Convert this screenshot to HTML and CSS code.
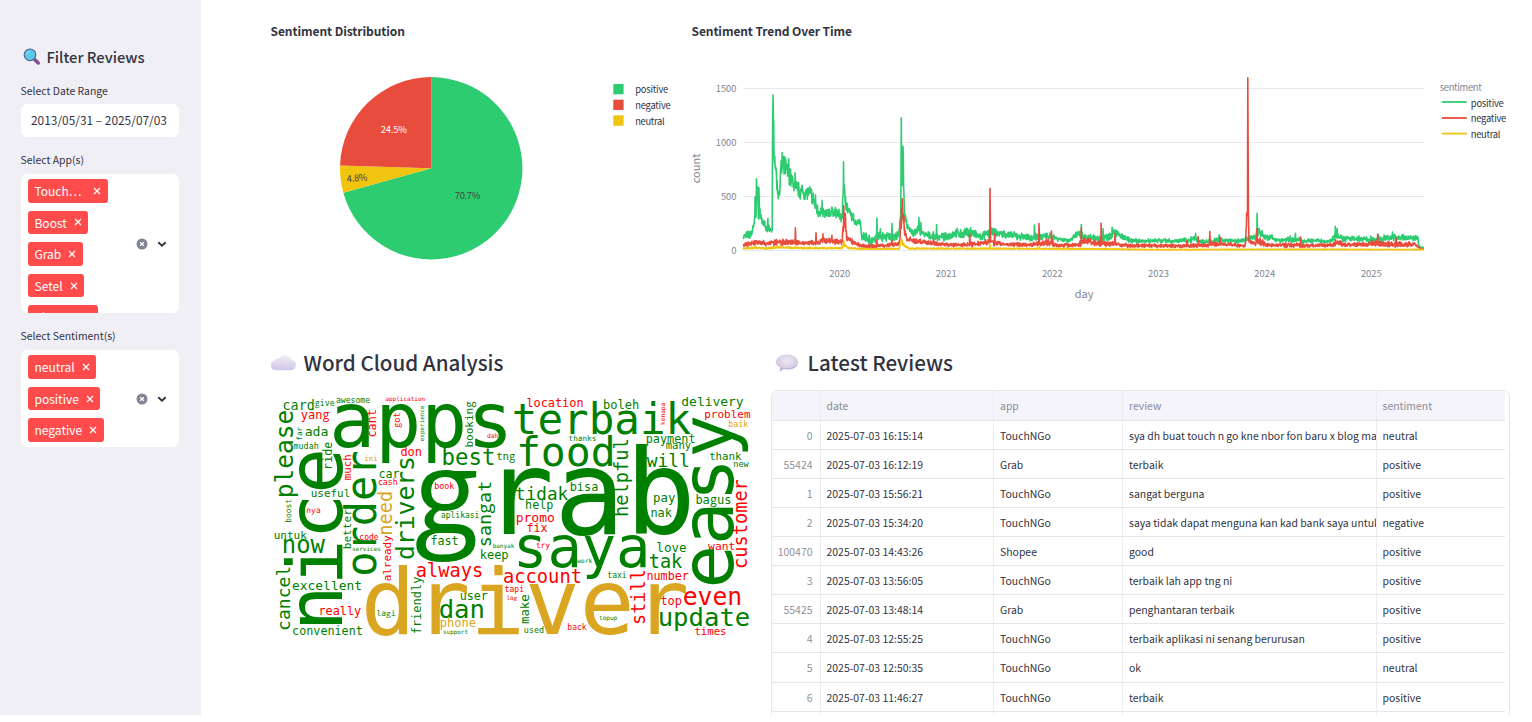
FILE: index.html
```html
<!DOCTYPE html>
<html lang="en">
<head>
<meta charset="utf-8">
<title>Review Dashboard</title>
<link rel="stylesheet" href="styles.css">
</head>
<body>
<svg width="0" height="0" class="defs">
  <defs>
    <symbol id="x" viewBox="0 0 8 8"><path d="M1 1L7 7M7 1L1 7" stroke="#fff" stroke-width="1.3" fill="none"/></symbol>
    <symbol id="controls" viewBox="0 0 36 12">
      <circle cx="6" cy="6" r="5.5" fill="#808495"/>
      <path d="M4.2 4.2L7.8 7.8M7.8 4.2L4.2 7.8" stroke="#fff" stroke-width="1.3"/>
      <path d="M22.3 4.3L26 7.8L29.7 4.3" stroke="#31333f" stroke-width="1.9" fill="none"/>
    </symbol>
  </defs>
</svg>
<div class="app">
  <aside class="sidebar">
    <h2 class="side-title">
      <svg class="lens" viewBox="0 0 18 18">
        <path d="M11.3 11.3L15.3 15" stroke="#7d4f8d" stroke-width="3.4" stroke-linecap="round"/>
        <circle cx="7" cy="6.8" r="5.8" fill="#5cc8ea" stroke="#4d6596" stroke-width="1.2"/>
        <path d="M4 6.5Q4.5 4 7 3.5" stroke="#8bdcf3" stroke-width="1.2" fill="none"/>
      </svg>
      <span>Filter Reviews</span>
    </h2>
    <div class="label">Select Date Range</div>
    <div class="field date">2013/05/31 – 2025/07/03</div>
    <div class="label label-apps">Select App(s)</div>
    <div class="field multi apps">
      <div class="chips">
        <span class="chip"><span class="cut">Touch…</span><svg><use href="#x"/></svg></span>
        <span class="chip">Boost<svg><use href="#x"/></svg></span>
        <span class="chip">Grab<svg><use href="#x"/></svg></span>
        <span class="chip">Setel<svg><use href="#x"/></svg></span>
        <span class="chip">Shopee<svg><use href="#x"/></svg></span>
      </div>
      <svg class="controls"><use href="#controls"/></svg>
    </div>
    <div class="label label-sent">Select Sentiment(s)</div>
    <div class="field multi sentiments">
      <div class="chips">
        <span class="chip">neutral<svg><use href="#x"/></svg></span>
        <span class="chip">positive<svg><use href="#x"/></svg></span>
        <span class="chip">negative<svg><use href="#x"/></svg></span>
      </div>
      <svg class="controls"><use href="#controls"/></svg>
    </div>
  </aside>
  <main class="main">
    <section class="charts">
      <svg class="pie" viewBox="271 0 421 340">
        <text class="chart-title" x="270.5" y="35.5" textLength="134.5">Sentiment Distribution</text>
        <g id="slices"></g>
        <text class="small inside-light" x="380.8" y="132.8" textLength="26">24.5%</text>
        <text class="small inside-dark" x="454.8" y="199" textLength="25.5">70.7%</text>
        <text class="small inside-dark" x="346.8" y="181.3" textLength="20.5" transform="rotate(-5 357 178)">4.8%</text>
        <rect x="613.3" y="84" width="10.3" height="10.3" fill="#2ecc71"/>
        <rect x="613.3" y="99.7" width="10.3" height="10.3" fill="#e74c3c"/>
        <rect x="613.3" y="115.4" width="10.3" height="10.3" fill="#f1c40f"/>
        <text class="small" x="635.2" y="93.4" textLength="33">positive</text>
        <text class="small" x="635.2" y="109.2" textLength="35.5">negative</text>
        <text class="small" x="635.2" y="124.9" textLength="29.5">neutral</text>
      </svg>
      <svg class="trend" viewBox="692 0 840 340">
        <text class="chart-title" x="691.5" y="35.5" textLength="160.5">Sentiment Trend Over Time</text>
        <path d="M743.5 88.5H1424.5M743.5 142.5H1424.5M743.5 196.5H1424.5M743.5 250.5H1424.5" stroke="#e8e8f0"/>
        <g class="small axis">
          <text x="736.5" y="92.2" text-anchor="end">1500</text>
          <text x="736.5" y="146.2" text-anchor="end">1000</text>
          <text x="736.5" y="200.2" text-anchor="end">500</text>
          <text x="736.5" y="254.2" text-anchor="end">0</text>
          <text x="839.7" y="277.3" text-anchor="middle">2020</text>
          <text x="946.2" y="277.3" text-anchor="middle">2021</text>
          <text x="1052.3" y="277.3" text-anchor="middle">2022</text>
          <text x="1158.5" y="277.3" text-anchor="middle">2023</text>
          <text x="1264.7" y="277.3" text-anchor="middle">2024</text>
          <text x="1371.3" y="277.3" text-anchor="middle">2025</text>
          <text class="axis-title" x="1084" y="298" text-anchor="middle">day</text>
          <text class="axis-title" transform="translate(700 168.5) rotate(-90)" text-anchor="middle">count</text>
          <text x="1439.7" y="90.5" textLength="42">sentiment</text>
        </g>
        <g id="series"></g>
        <path d="M1442 102H1466.8" stroke="#2ecc71" stroke-width="1.8"/>
        <path d="M1442 118H1466.8" stroke="#e74c3c" stroke-width="1.8"/>
        <path d="M1442 133.6H1466.8" stroke="#f1c40f" stroke-width="1.8"/>
        <text class="small" x="1470.8" y="106.5" textLength="33">positive</text>
        <text class="small" x="1470.8" y="122.3" textLength="35.5">negative</text>
        <text class="small" x="1470.8" y="138.1" textLength="29.5">neutral</text>
      </svg>
    </section>
    <section class="lower">
      <div class="cloud-panel">
        <h2 class="heading">
          <svg class="emoji" viewBox="0 0 26 20">
            <defs><linearGradient id="cg" x2="0" y2="1"><stop offset="0" stop-color="#efeff4"/><stop offset="1" stop-color="#cfc5ea"/></linearGradient></defs>
            <path d="M5.2 17.2A4.9 4.9 0 0 1 4 7.8Q5.6 4.3 9.2 5.5A6.9 6.9 0 0 1 21.3 6.5A5.4 5.4 0 0 1 19.8 17.2Z" fill="url(#cg)"/>
            <path d="M9 6Q13 7 13 11M14 14Q18 15 20 10" stroke="#d8d4e6" fill="none" stroke-width=".8"/>
          </svg>
          <span>Word Cloud Analysis</span>
        </h2>
        <svg class="cloud" id="cloud" viewBox="271 390 484 250"></svg>
      </div>
      <div class="reviews-panel">
        <h2 class="heading">
          <svg class="emoji" viewBox="0 0 26 20">
            <defs><radialGradient id="bg" cy=".35"><stop offset="0" stop-color="#efeaf2"/><stop offset="1" stop-color="#d5c9e4"/></radialGradient></defs>
            <path d="M12 1.6C18.5 1.6 23 4.9 23 9.2S18.5 16.4 12.5 16.4C11 16.4 9.7 16.3 8.5 16L4.7 18.6L5.3 14.6C2.5 13.3 1 11.5 1 9.2C1 4.9 5.7 1.6 12 1.6Z" fill="url(#bg)"/>
            <path d="M1.5 11Q4 15.4 12 15.4Q20 15.2 22.6 11Q21.5 16.4 12.5 16.4L8.5 16L4.7 18.6L5.3 14.6Q2 13 1.5 11Z" fill="#c3b3d8"/>
          </svg>
          <span>Latest Reviews</span>
        </h2>
        <div class="table">
          <div class="row head"><span></span><span>date</span><span>app</span><span>review</span><span>sentiment</span></div>
          <div class="row"><span>0</span><span>2025-07-03 16:15:14</span><span>TouchNGo</span><span>sya dh buat touch n go kne nbor fon baru x blog ma</span><span>neutral</span></div>
          <div class="row"><span>55424</span><span>2025-07-03 16:12:19</span><span>Grab</span><span>terbaik</span><span>positive</span></div>
          <div class="row"><span>1</span><span>2025-07-03 15:56:21</span><span>TouchNGo</span><span>sangat berguna</span><span>positive</span></div>
          <div class="row"><span>2</span><span>2025-07-03 15:34:20</span><span>TouchNGo</span><span>saya tidak dapat menguna kan kad bank saya untuk</span><span>negative</span></div>
          <div class="row"><span>100470</span><span>2025-07-03 14:43:26</span><span>Shopee</span><span>good</span><span>positive</span></div>
          <div class="row"><span>3</span><span>2025-07-03 13:56:05</span><span>TouchNGo</span><span>terbaik lah app tng ni</span><span>positive</span></div>
          <div class="row"><span>55425</span><span>2025-07-03 13:48:14</span><span>Grab</span><span>penghantaran terbaik</span><span>positive</span></div>
          <div class="row"><span>4</span><span>2025-07-03 12:55:25</span><span>TouchNGo</span><span>terbaik aplikasi ni senang berurusan</span><span>positive</span></div>
          <div class="row"><span>5</span><span>2025-07-03 12:50:35</span><span>TouchNGo</span><span>ok</span><span>neutral</span></div>
          <div class="row"><span>6</span><span>2025-07-03 11:46:27</span><span>TouchNGo</span><span>terbaik</span><span>positive</span></div>
          <div class="row"><span></span><span></span><span></span><span></span><span></span></div>
        </div>
      </div>
    </section>
  </main>
</div>
<script src="app.js"></script>
</body>
</html>
```
FILE: styles.css
```css
* { box-sizing: border-box; }
body {
  margin: 0;
  background: #fff;
  color: #31333f;
  font-family: "Noto Sans CJK SC", "Noto Sans", sans-serif;
}
h2 { margin: 0; font-weight: 500; }
.defs { position: absolute; }
.app { display: flex; height: 715px; overflow: hidden; }

.sidebar { width: 201px; flex: none; background: #f0eff5; padding: 45px 22px 0 20.5px; }
.side-title { display: flex; align-items: center; height: 23px; font-size: 14.75px; line-height: 23px; }
.lens { width: 18px; height: 18px; margin: 0 5.5px 0 2.5px; }
.label { font-size: 10.45px; line-height: 16px; margin-top: 14.6px; height: 16px; white-space: nowrap; }
.label-apps { margin-top: 15px; }
.label-sent { margin-top: 15px; }
.field { background: #fff; border-radius: 6.5px; width: 158.5px; }
.date { margin-top: 5.9px; height: 32.5px; line-height: 32px; padding-left: 10.5px; font-size: 11.9px; white-space: nowrap; }
.multi { margin-top: 6.4px; padding: 4.6px 7.3px; display: flex; justify-content: space-between; align-items: center; overflow: hidden; }
.apps { height: 139px; align-items: flex-start; }
.apps .controls { margin-top: 59px; }
.sentiments { height: 96.5px; margin-top: 6px; }
.chips { display: flex; flex-direction: column; align-items: flex-start; gap: 8px; }
.chip { display: flex; align-items: center; height: 23.6px; padding: 0 6.4px 0 6.7px; border-radius: 3px; background: #ff4b4b; color: #fff; font-size: 12px; line-height: 23.6px; }
.chip svg { width: 8px; height: 8px; margin-left: 7px; }
.cut { width: 52px; }
.controls { width: 36px; height: 12px; flex: none; margin-right: -.5px; }

.main { flex: 1; padding-left: 70px; min-width: 0; }
.charts { display: flex; height: 340px; }
.pie { width: 421px; height: 340px; flex: none; overflow: visible; }
.trend { width: 840px; height: 340px; flex: none; overflow: visible; }
.chart-title { font-size: 12px; font-weight: 700; fill: #31333f; }
.small { font-size: 9.4px; fill: #31333f; }
.axis { fill: #808495; }
.axis-title { font-size: 11px; }
.inside-light { fill: #fff; }
.inside-dark { fill: #444; }
.lower { display: grid; grid-template-columns: 500px 739px; }
.heading { display: flex; align-items: center; height: 50px; font-size: 20.6px; line-height: 45px; padding-bottom: 5px; }
.emoji { width: 26px; height: 20px; margin-right: 7.5px; margin-left: -1px; }
.reviews-panel .emoji { margin-left: 4px; margin-right: 6.5px; }
.cloud { display: block; width: 484px; height: 250px; overflow: visible; font-family: "DejaVu Sans Mono", monospace; }
.loop-g { font-family: "Open Sans", sans-serif; }

.table { height: 340px; border: 1px solid #e6e6eb; border-radius: 7px; overflow: hidden; }
.row { display: grid; grid-template-columns: 48.5px 173.5px 129px 253.5px 128.5px; width: 733px; height: 29.08px; border-bottom: 1px solid #e6e6ea; font-size: 10.45px; line-height: 29px; }
.row span { border-right: 1px solid #ededf1; padding-left: 6px; white-space: nowrap; overflow: hidden; }
.row span:last-child { border-right: 0; }
.row span:first-child { text-align: right; padding: 0 7px 0 0; color: #8f919b; }
.head { height: 29.8px; background: #f5f4fa; color: #8a8c97; line-height: 30.4px; }
```
FILE: app.js
```js
const NS = 'http://www.w3.org/2000/svg';
function add(parent, tag, attrs, text) {
  const el = document.createElementNS(NS, tag);
  for (const k in attrs) el.setAttribute(k, attrs[k]);
  if (text) el.textContent = text;
  parent.appendChild(el);
  return el;
}

// Pie slices, clockwise from twelve o'clock
const cx = 431.2, cy = 168.3, r = 91.2;
let turn = 0;
[[0.707, '#2ecc71'], [0.048, '#f1c40f'], [0.245, '#e74c3c']].forEach(([share, fill]) => {
  const p = t => (cx + r * Math.sin(t * 2 * Math.PI)).toFixed(2) + ' ' + (cy - r * Math.cos(t * 2 * Math.PI)).toFixed(2);
  add(document.getElementById('slices'), 'path', {
    d: `M${cx} ${cy}L${p(turn)}A${r} ${r} 0 ${share > 0.5 ? 1 : 0} 1 ${p(turn + share)}Z`, fill
  });
  turn += share;
});

// Daily review counts: [x, level, spread] trend points plus [x, count] peaks
let seed = 7;
const rand = () => (seed = (seed * 16807) % 2147483647) / 2147483647;
function line(color, base, peaks) {
  let d = '', k = 0;
  const pts = [];
  for (let x = 743.5; x <= 1424; x += 0.29) {
    while (k < base.length - 2 && base[k + 1][0] < x) k++;
    const a = base[k], b = base[k + 1];
    const t = Math.min(1, (x - a[0]) / (b[0] - a[0]));
    const level = a[1] + (b[1] - a[1]) * t, amp = a[2] + (b[2] - a[2]) * t;
    pts.push([x, Math.max(2, level + (rand() + rand() - 1) * amp)]);
  }
  peaks.forEach(([x, v]) => {
    const i = Math.round((x - 743.5) / 0.29);
    if (!pts[i]) return;
    pts[i][1] = v;
    if (pts[i + 1]) pts[i + 1][1] = Math.max(pts[i + 1][1], v * 0.6);
  });
  pts.forEach(([x, v]) => { d += (d ? 'L' : 'M') + x.toFixed(1) + ' ' + (250.5 - v * 0.108).toFixed(1); });
  add(document.getElementById('series'), 'path', { d, fill: 'none', stroke: color, 'stroke-width': 1.6, 'stroke-linejoin': 'round' });
}
line('#2ecc71', [
  [743, 130, 40], [751, 150, 50], [754, 220, 80], [755.5, 450, 190], [759, 450, 170], [760.5, 310, 60], [763, 260, 50], [766, 200, 50], [772.3, 195, 50],
  [772.6, 1300, 40], [773.6, 1150, 100], [774.3, 880, 60], [776, 740, 60], [777.3, 560, 90], [779, 530, 80], [781, 740, 120], [785, 780, 110], [790, 690, 110],
  [794, 600, 90], [800, 550, 80], [811, 530, 80], [814, 450, 80], [818, 370, 70], [825, 340, 50], [835, 360, 60], [842, 300, 60],
  [843.3, 600, 100], [846, 430, 80], [849, 350, 60], [853, 300, 60], [856, 255, 30], [860, 280, 40], [862, 130, 60], [868, 120, 60], [871, 85, 30], [877, 130, 70],
  [885, 125, 50], [899, 130, 50], [900.6, 350, 150], [901.2, 900, 250], [903.5, 600, 250], [904.4, 330, 80], [907, 230, 50], [914, 150, 50], [920, 200, 60], [924, 145, 40],
  [935, 125, 45], [945, 125, 40], [957, 165, 45], [961, 150, 50], [971, 175, 60], [980, 120, 40], [990, 170, 50], [1004, 150, 40], [1018, 130, 40], [1032, 120, 40],
  [1037, 130, 45], [1050, 130, 35], [1063, 100, 25], [1070, 95, 25], [1076, 150, 50], [1085, 120, 40], [1100, 110, 40], [1110, 130, 50], [1114, 180, 50], [1122, 125, 35], [1130, 95, 25],
  [1145, 85, 20], [1155, 95, 25], [1175, 85, 20], [1193, 105, 35], [1205, 80, 25], [1220, 95, 30], [1240, 85, 20], [1256, 130, 40], [1259, 180, 50], [1264, 130, 40],
  [1280, 95, 30], [1292, 105, 35], [1305, 90, 25], [1330, 85, 25], [1337, 150, 50], [1342, 110, 30], [1370, 100, 35], [1395, 120, 35], [1418, 115, 25], [1419, 30, 18], [1425, 22, 12]
], [[756.5, 665], [759, 580], [767.9, 295], [773, 1440], [782, 905], [784.5, 870], [788.8, 850], [795, 720], [815.5, 515], [822, 465], [843.6, 820], [845.5, 500], [877, 300], [880.5, 200], [892, 250], [901.2, 1230], [903.1, 965], [919, 305], [921, 260], [936.5, 240], [1034.5, 235], [1081.3, 240], [1103, 200], [1112, 215], [1195.5, 160], [1219, 145], [1257, 345], [1295.5, 160], [1335.5, 225], [1337, 200], [1378, 150], [1392.5, 170]]);
line('#e74c3c', [
  [743, 55, 25], [753, 65, 30], [757, 85, 30], [765, 65, 25], [775, 75, 30], [785, 80, 35], [800, 70, 22], [818, 70, 30], [824, 90, 35], [842, 75, 30],
  [843.3, 250, 120], [845.7, 200, 150], [847, 110, 40], [853, 80, 30], [861, 45, 20], [875, 40, 20], [899, 60, 25], [900.8, 200, 80], [902, 380, 130], [904, 220, 90], [907, 105, 35],
  [920, 80, 25], [935, 65, 25], [955, 50, 20], [975, 60, 25], [988, 85, 35], [992, 75, 35], [1005, 55, 20], [1030, 55, 20], [1048, 75, 35], [1060, 45, 20], [1078, 55, 25],
  [1087, 95, 50], [1097, 65, 30], [1115, 60, 25], [1130, 45, 20], [1180, 42, 18], [1200, 45, 20], [1222, 65, 25], [1245, 40, 15], [1247.2, 400, 200], [1248.4, 300, 200], [1249, 90, 25],
  [1255, 60, 20], [1258, 95, 45], [1268, 50, 20], [1290, 50, 28], [1310, 45, 18], [1333, 50, 20], [1337, 75, 30], [1345, 50, 20], [1375, 65, 30], [1395, 55, 28], [1415, 55, 25], [1418, 35, 10], [1420, 18, 8], [1425, 14, 6]
], [[795.3, 210], [816, 165], [823, 155], [832, 140], [843.8, 415], [845.3, 345], [877, 100], [892, 95], [902.3, 480], [904, 315], [933.5, 105], [969.8, 150], [990.1, 575], [994.5, 155], [1038.9, 250], [1051.5, 180], [1081.4, 210], [1101, 252], [1115, 155], [1187, 90], [1198.3, 130], [1209.8, 175], [1220, 125], [1247.7, 1600], [1256.7, 200], [1300.5, 125], [1335.6, 100], [1377.7, 150], [1396, 115]]);
line('#f1c40f', [[743, 18, 8], [756, 25, 12], [765, 20, 8], [780, 30, 12], [800, 22, 9], [842, 22, 8], [844, 60, 25], [848, 25, 10], [862, 14, 6], [899, 16, 7], [901.5, 85, 35], [904, 50, 20], [909, 18, 8], [990, 18, 7], [1100, 14, 6], [1150, 8, 4], [1300, 10, 4], [1425, 8, 4]],
  [[755.5, 45], [843.8, 90], [901.6, 110], [990.1, 55], [1038.9, 30]]);

// Word cloud: word, left edge, right edge, baseline, colour
const G = '#008000', R = '#ff0000', Y = '#daa520';
const across = [
  ['grab', 418, 690, 533.5, G], ['driver', 365.3, 684.7, 634, Y], ['apps', 333.2, 509.5, 446.7, G], ['terbaik', 514, 689, 434.3, G],
  ['food', 518, 613.5, 466.3, G], ['saya', 516, 647.5, 567, G],
  ['card', 283.3, 314, 410, G], ['give', 315.3, 334.3, 405.5, G], ['awesome', 336.3, 369.7, 402.7, G], ['application', 385.7, 425, 401.3, R],
  ['yang', 301.3, 329, 419, R], ['ada', 305.3, 327.7, 436, G], ['mudah', 294, 318.3, 449.3, G], ['ini', 364.7, 377.3, 461.3, Y],
  ['car', 379, 399, 478.3, G], ['cash', 378.3, 397.3, 484.9, R], ['dah', 487.3, 498, 438, R], ['don', 401, 421.3, 456, R],
  ['best', 442.7, 494.3, 465.3, G], ['tng', 496.7, 515, 459.7, G], ['useful', 311.3, 349.7, 497, G], ['book', 434.7, 454, 488.7, R],
  ['aplikasi', 441.3, 479, 517.7, G], ['fast', 431, 458, 545, G], ['banyak', 493, 514, 548, G], ['keep', 480.3, 508, 558.7, G],
  ['untuk', 274.3, 306.3, 538.7, G], ['now', 283, 323.7, 552.7, G], ['nya', 306.7, 320.3, 513, R], ['code', 359.7, 378.3, 539.7, R],
  ['services', 352.3, 380.7, 551.3, G], ['excellent', 292.7, 361.3, 589.7, G], ['always', 416.7, 482.3, 577, R], ['really', 319, 360.7, 615, R],
  ['convenient', 292.7, 362.3, 635, G], ['lagi', 377, 395.3, 615.7, G], ['user', 460.3, 487.3, 600, G], ['dan', 440, 483.7, 617.7, G],
  ['phone', 440.3, 475.3, 626.7, Y], ['support', 443.3, 467.7, 633.7, G], ['location', 527, 583, 407, R], ['boleh', 603.7, 638.7, 409, G],
  ['delivery', 682, 743, 406.3, G], ['problem', 704.7, 750, 418.3, R], ['baik', 728.7, 748, 427.3, Y], ['thanks', 569, 596, 441, G],
  ['payment', 646.3, 695, 442.7, G], ['many', 666.3, 690.7, 449, G], ['will', 647.7, 689, 466.7, G], ['thank', 709.7, 741, 460.3, G],
  ['new', 733.7, 748.3, 467.3, G], ['bisa', 570.3, 597.7, 491.3, G], ['tidak', 516, 567.3, 499.5, G], ['pay', 653.7, 674.7, 502, G],
  ['bagus', 696, 731, 504.3, G], ['help', 525.7, 552.7, 509, G], ['promo', 516.3, 554.3, 521.7, R], ['fix', 527, 547, 531.7, R],
  ['nak', 651, 671.3, 517, G], ['try', 536.3, 549.7, 548, R], ['work', 577.3, 592, 563.3, G], ['love', 657, 686, 552, G],
  ['tak', 649.7, 681.3, 568, G], ['want', 708.7, 734.7, 549.7, R], ['account', 504, 581, 582.7, R], ['taxi', 607.7, 626.3, 577.7, G],
  ['number', 647, 688.3, 580.3, R], ['tapi', 505, 523.7, 591.7, R], ['log', 506.7, 517, 600.3, R], ['used', 524.3, 543.7, 633.3, G],
  ['back', 567.7, 586.3, 629.7, R], ['topup', 599.3, 617, 620, G], ['top', 661, 681.3, 605.3, R], ['even', 684, 741, 604.7, R],
  ['update', 659, 749, 626.3, G], ['times', 695, 726, 635, R]
];
// Rotated words: word, bottom edge, top edge, baseline x, colour
const upward = [
  ['nice', 627.3, 451.7, 341.6, G], ['easy', 584.7, 418.3, 733, G], ['order', 574.7, 452.7, 376.3, G], ['please', 497, 411, 293, G],
  ['far', 440.3, 427.3, 302.3, G], ['boost', 522.3, 499.3, 290.7, G], ['ride', 469.3, 442.3, 331.7, G], ['much', 479.7, 455, 351, R],
  ['cant', 437, 409.7, 376.3, R], ['got', 427.3, 413, 400, R], ['experience', 441, 405.7, 423.5, G], ['booking', 447, 401.7, 473, G],
  ['need', 534.7, 491.7, 392, Y], ['drivers', 558.7, 457.3, 414, G], ['sangat', 546.3, 481.7, 491.3, G], ['better', 548.7, 509.7, 351, G],
  ['already', 580.7, 535.7, 391, R], ['cancel', 630, 566.7, 290, G], ['friendly', 633.7, 577.3, 421, G], ['kenapa', 424.7, 403, 665, R],
  ['helpful', 516, 439, 628, G], ['customer', 568, 480, 746.5, R], ['make', 623.3, 595, 528.5, G], ['still', 624, 570, 645.3, R]
];
const cloud = document.getElementById('cloud');
// Letters sit on a fixed pitch; the letter g uses a double-storey shape
function word(w, start, adv, attrs) {
  const t = add(cloud, 'text', { ...attrs, 'font-size': (adv / 0.602).toFixed(2) });
  w.split(/(g)/).filter(Boolean).reduce((i, part) => {
    const a = { x: (start + i * adv + (part === 'g' ? 0.035 * adv : 0)).toFixed(2) };
    if (part === 'g') a.class = 'loop-g';
    add(t, 'tspan', a, part);
    return i + part.length;
  }, 0);
}
across.forEach(([w, a, b, y, fill]) => {
  const adv = (b - a) / (w.length - 0.17);
  word(w, a - 0.085 * adv, adv, { y, fill });
});
upward.forEach(([w, a, b, x, fill]) => {
  const adv = (a - b) / (w.length - 0.17);
  word(w, 0, adv, { transform: `translate(${x} ${(a + 0.085 * adv).toFixed(1)}) rotate(-90)`, fill });
});
```
